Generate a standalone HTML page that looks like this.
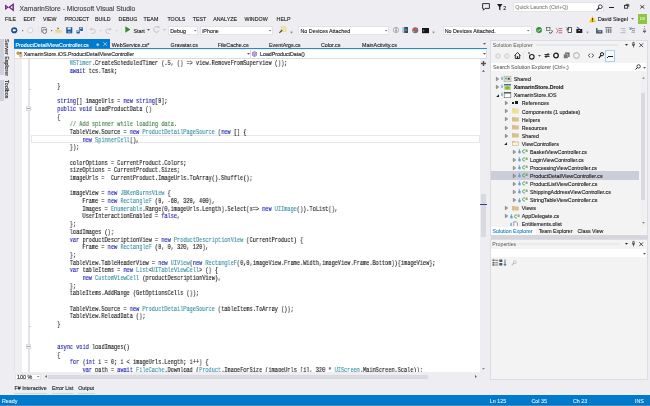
<!DOCTYPE html>
<html><head><meta charset="utf-8"><style>
html,body{margin:0;padding:0;}
body{width:650px;height:406px;overflow:hidden;background:#eeeef2;position:relative;will-change:transform;font-family:"Liberation Sans",sans-serif;}
.t{position:absolute;white-space:pre;line-height:1;-webkit-text-stroke:0.12px currentColor;font-family:"Liberation Sans",sans-serif;}
.b{position:absolute;}
svg.b{overflow:visible}
.code{position:absolute;margin:0;-webkit-text-stroke:0.14px currentColor;transform-origin:0 0;transform:scaleX(0.8219);font-family:"Liberation Mono",monospace;font-size:6.4px;color:#1a1a1a;white-space:pre;}
</style></head><body>
<svg class="b" style="left:5.1px;top:3.3px" width="9" height="8.5" viewBox="0 0 9 8.5"><path d="M8.9 0 V8.5 L3.2 4.25 Z" fill="#68217a"/><path d="M7.5 2.6 V5.9 L5.3 4.25Z" fill="#efe6f4"/><path d="M0 1.6 L3.8 4.25 L0 6.9Z" fill="#68217a"/><path d="M0.8 3.3 L2.1 4.25 L0.8 5.2Z" fill="#b888d3"/></svg>
<div class="t" style="left:19.5px;top:5.68px;font-size:6.76px;color:#444444;font-weight:normal;">XamarinStore - Microsoft Visual Studio</div>
<svg class="b" style="left:482px;top:3px" width="8" height="8" viewBox="0 0 8 8"><path d="M0.6 0.6 H7.4 V5.4 H3 L1.4 7.2 V5.4 H0.6 Z" fill="none" stroke="#1e1e1e" stroke-width="0.9"/></svg>
<svg class="b" style="left:497px;top:3.5px" width="6" height="7" viewBox="0 0 6 7"><path d="M0 0 H5.5 L3.4 3 V6.5 L2.1 5.6 V3 Z" fill="#1e1e1e"/></svg>
<div class="t" style="left:503.3px;top:5.53px;font-size:5.3px;color:#1e1e1e;font-weight:normal;">2</div>
<div class="b" style="left:512.5px;top:2px;width:91px;height:10px;background:#ffffff;border:0.6px solid #e3e4ea;box-sizing:border-box"></div>
<div class="t" style="left:515.3px;top:5.43px;font-size:5.3px;color:#8a8a8a;font-weight:normal;">Quick Launch (Ctrl+Q)</div>
<svg class="b" style="left:596px;top:3.5px" width="7" height="7" viewBox="0 0 7 7"><circle cx="4.3" cy="2.7" r="1.9" fill="none" stroke="#1e1e1e" stroke-width="0.9"/><path d="M3 4 L0.6 6.4" stroke="#1e1e1e" stroke-width="1.1"/></svg>
<div class="b" style="left:608.8px;top:6.9px;width:5px;height:1.2px;background:#1e1e1e;"></div>
<svg class="b" style="left:624.2px;top:4.2px" width="5.2" height="4.5" viewBox="0 0 5.2 4.5"><path d="M1.6 0.4 H4.8 V2.8" fill="none" stroke="#1e1e1e" stroke-width="0.8"/><rect x="0.4" y="1.5" width="3.3" height="2.7" fill="none" stroke="#1e1e1e" stroke-width="0.8"/></svg>
<svg class="b" style="left:640px;top:4.5px" width="4.6" height="3.8" viewBox="0 0 4.6 3.8"><path d="M0.3 0.3 L4.3 3.5 M4.3 0.3 L0.3 3.5" stroke="#1e1e1e" stroke-width="0.8"/></svg>
<div class="t" style="left:4.9px;top:17.03px;font-size:5.3px;color:#1e1e1e;width:9.7px;" data-w="9.1">FILE</div>
<div class="t" style="left:23.4px;top:17.03px;font-size:5.3px;color:#1e1e1e;width:11.2px;" data-w="10.600000000000001">EDIT</div>
<div class="t" style="left:43px;top:17.03px;font-size:5.3px;color:#1e1e1e;width:13.6px;" data-w="13">VIEW</div>
<div class="t" style="left:64.6px;top:17.03px;font-size:5.3px;color:#1e1e1e;width:21.4px;" data-w="20.80000000000001">PROJECT</div>
<div class="t" style="left:95px;top:17.03px;font-size:5.3px;color:#1e1e1e;width:14.6px;" data-w="14">BUILD</div>
<div class="t" style="left:118.6px;top:17.03px;font-size:5.3px;color:#1e1e1e;width:17.0px;" data-w="16.400000000000006">DEBUG</div>
<div class="t" style="left:143.6px;top:17.03px;font-size:5.3px;color:#1e1e1e;width:15.3px;" data-w="14.700000000000017">TEAM</div>
<div class="t" style="left:167.4px;top:17.03px;font-size:5.3px;color:#1e1e1e;width:16.9px;" data-w="16.299999999999983">TOOLS</div>
<div class="t" style="left:192.8px;top:17.03px;font-size:5.3px;color:#1e1e1e;width:11.8px;" data-w="11.199999999999989">TEST</div>
<div class="t" style="left:213.2px;top:17.03px;font-size:5.3px;color:#1e1e1e;width:22.6px;" data-w="22.0">ANALYZE</div>
<div class="t" style="left:244.4px;top:17.03px;font-size:5.3px;color:#1e1e1e;width:24.2px;" data-w="23.599999999999994">WINDOW</div>
<div class="t" style="left:276.6px;top:17.03px;font-size:5.3px;color:#1e1e1e;width:13.0px;" data-w="12.399999999999977">HELP</div>
<svg class="b" style="left:589px;top:16px" width="7" height="6.5" viewBox="0 0 7 6.5"><path d="M3.5 0.2 L6.9 6.3 H0.1 Z" fill="#f5c400"/><rect x="3.1" y="2" width="0.8" height="2.4" fill="#1e1e1e"/><rect x="3.1" y="4.9" width="0.8" height="0.8" fill="#1e1e1e"/></svg>
<div class="t" style="left:597.9px;top:17.40px;font-size:5.35px;color:#1e1e1e;font-weight:normal;">David Siegel</div>
<svg class="b" style="left:631px;top:18px" width="3" height="2" viewBox="0 0 3 2"><path d="M0 0 H3 L1.5 1.8Z" fill="#717171"/></svg>
<div class="b" style="left:638px;top:14px;width:9px;height:9.5px;background:#8dc63f;"></div>
<div class="t" style="left:640px;top:18.07px;font-size:3.5px;color:#e8f5d0;font-weight:normal;">DS</div>
<div class="b" style="left:6.5px;top:26px;width:0.8px;height:9px;background:repeating-linear-gradient(#d0d0d6 0 1px, transparent 1px 2px);"></div>
<svg class="b" style="left:10.8px;top:27px" width="6.5" height="6.5" viewBox="0 0 6.5 6.5"><circle cx="3.25" cy="3.25" r="3.1" fill="#1f4e86"/><path d="M1.8 2.2 H4.2 L5 3.25 L4.2 4.3 H1.8Z" fill="#fff"/></svg>
<svg class="b" style="left:21.5px;top:29.6px" width="2" height="2"><rect width="1.2" height="1.2" fill="#717171"/></svg>
<svg class="b" style="left:26.8px;top:27px" width="6.5" height="6.5" viewBox="0 0 6.5 6.5"><circle cx="3.25" cy="3.25" r="2.6" fill="#f4f4f6" stroke="#cfcfd2" stroke-width="0.9"/></svg>
<div class="b" style="left:38px;top:26px;width:0.6px;height:9px;background:#e6e7ec;"></div>
<svg class="b" style="left:40.5px;top:26.6px" width="7" height="7" viewBox="0 0 7 7"><path d="M1 0.5 H4.5 L5.5 1.5 V3" fill="none" stroke="#777" stroke-width="0.8"/><circle cx="3.6" cy="4.4" r="2" fill="#eee" stroke="#666" stroke-width="0.9"/><path d="M0.7 0.5 V5.5" stroke="#777" stroke-width="0.8"/></svg>
<svg class="b" style="left:50.5px;top:29.6px" width="2" height="2"><rect width="1.2" height="1.2" fill="#717171"/></svg>
<svg class="b" style="left:55px;top:27px" width="7" height="6.5" viewBox="0 0 7 6.5"><path d="M0.3 2.6 H2.8 L3.4 3.2 H6.8 V6.3 H0.3Z" fill="#eedb9c"/><path d="M0.3 3.6 H6.8" stroke="#d8c07a" stroke-width="0.5"/><path d="M2.6 0.3 L4 1.5 L2.6 2.6" fill="#333"/></svg>
<svg class="b" style="left:65.8px;top:27.2px" width="6.5" height="6.5" viewBox="0 0 6.5 6.5"><rect x="0.2" y="0.2" width="6.1" height="6.1" fill="#1f5c99"/><rect x="1.6" y="0.5" width="3.2" height="2" fill="#eaf2fb"/><rect x="2" y="4" width="2.5" height="2.3" fill="#6b94c4"/></svg>
<svg class="b" style="left:75.5px;top:26.8px" width="7" height="7" viewBox="0 0 7 7"><rect x="3" y="0.2" width="3.8" height="3.8" fill="#1f5c99"/><rect x="0.2" y="3" width="3.8" height="3.8" fill="#1f5c99" stroke="#eeeef2" stroke-width="0.5"/><rect x="1" y="3.6" width="2" height="1" fill="#eaf2fb"/><rect x="3.7" y="0.7" width="2" height="1" fill="#eaf2fb"/></svg>
<div class="b" style="left:86px;top:26px;width:0.6px;height:9px;background:#e6e7ec;"></div>
<svg class="b" style="left:89px;top:26.8px" width="7" height="7" viewBox="0 0 7 7"><path d="M2.2 2.2 H4.2 A2 2 0 0 1 4.2 6.3 H2.6" fill="none" stroke="#c4c4c8" stroke-width="0.9"/><path d="M0.4 2.2 L2.5 0.4 V4Z" fill="#c4c4c8"/></svg>
<svg class="b" style="left:99.5px;top:29.6px" width="2" height="2"><rect width="1.2" height="1.2" fill="#c8c8c8"/></svg>
<svg class="b" style="left:105px;top:26.8px" width="7" height="7" viewBox="0 0 7 7"><path d="M4.8 2.2 H2.8 A2 2 0 0 0 2.8 6.3 H4.4" fill="none" stroke="#c4c4c8" stroke-width="0.9"/><path d="M6.6 2.2 L4.5 0.4 V4Z" fill="#c4c4c8"/></svg>
<svg class="b" style="left:115.5px;top:29.6px" width="2" height="2"><rect width="1.2" height="1.2" fill="#c8c8c8"/></svg>
<div class="b" style="left:120.5px;top:26px;width:0.6px;height:9px;background:#e6e7ec;"></div>
<svg class="b" style="left:125px;top:26.3px" width="6" height="7" viewBox="0 0 6 7"><path d="M0.3 0.3 L5.5 3.5 L0.3 6.7Z" fill="#388a34"/></svg>
<div class="t" style="left:133.5px;top:28.70px;font-size:5.35px;color:#1e1e1e;font-weight:normal;">Start</div>
<svg class="b" style="left:147px;top:29.3px" width="3" height="2" viewBox="0 0 3 2"><path d="M0 0 H3 L1.5 1.8Z" fill="#555"/></svg>
<svg class="b" style="left:153px;top:26.3px" width="7" height="7" viewBox="0 0 7 7"><path d="M5.8 2 A2.8 2.8 0 1 0 6 4.5" fill="none" stroke="#bdbdbd" stroke-width="1"/><path d="M4.5 0.3 L6.5 0.5 L6.2 2.6Z" fill="#bdbdbd"/></svg>
<svg class="b" style="left:163px;top:29.3px" width="3" height="2" viewBox="0 0 3 2"><path d="M0 0 H3 L1.5 1.8Z" fill="#bdbdbd"/></svg>
<div class="b" style="left:168px;top:25.6px;width:30px;height:9.399999999999999px;background:#ffffff;border:0.8px solid #e2e3e8;box-sizing:border-box"></div>
<div class="t" style="left:170.2px;top:28.50px;font-size:5.35px;color:#1e1e1e;font-weight:normal;">Debug</div>
<svg class="b" style="left:193.7px;top:29.7px" width="2.4" height="1.6" viewBox="0 0 2.4 1.6"><path d="M0 0 H2.4 L1.2 1.5Z" fill="#717171"/></svg>
<div class="b" style="left:200px;top:25.6px;width:73.39999999999998px;height:9.399999999999999px;background:#ffffff;border:0.8px solid #e2e3e8;box-sizing:border-box"></div>
<div class="t" style="left:202.2px;top:28.50px;font-size:5.35px;color:#1e1e1e;font-weight:normal;">iPhone</div>
<svg class="b" style="left:269.09999999999997px;top:29.7px" width="2.4" height="1.6" viewBox="0 0 2.4 1.6"><path d="M0 0 H2.4 L1.2 1.5Z" fill="#717171"/></svg>
<svg class="b" style="left:278.8px;top:26.2px" width="8" height="7.5" viewBox="0 0 8 7.5"><rect x="1.8" y="0.4" width="5.6" height="5.4" fill="#ead68c"/><rect x="2.6" y="1.2" width="4" height="3.8" fill="#f3e4a8"/><path d="M0.4 6.8 L3.2 4" stroke="#4a4a55" stroke-width="1.2"/></svg>
<svg class="b" style="left:290px;top:31.3px" width="3" height="3" viewBox="0 0 3 3"><path d="M0.3 0.4 H2.7" stroke="#999" stroke-width="0.5"/><path d="M0.3 1.2 H2.7 L1.5 2.6Z" fill="#666"/></svg>
<div class="b" style="left:298.3px;top:25.6px;width:91.09999999999997px;height:9.399999999999999px;background:#ffffff;border:0.8px solid #e2e3e8;box-sizing:border-box"></div>
<div class="t" style="left:300.5px;top:28.50px;font-size:5.35px;color:#1e1e1e;font-weight:normal;">No Devices Attached</div>
<svg class="b" style="left:385.09999999999997px;top:29.7px" width="2.4" height="1.6" viewBox="0 0 2.4 1.6"><path d="M0 0 H2.4 L1.2 1.5Z" fill="#717171"/></svg>
<svg class="b" style="left:392.6px;top:27px" width="6" height="6" viewBox="0 0 6 6"><circle cx="3" cy="3" r="2.6" fill="#fafafa" stroke="#8a8a90" stroke-width="0.7"/><rect x="2.6" y="2.4" width="0.9" height="2.2" fill="#333"/><rect x="2.6" y="1.2" width="0.9" height="0.7" fill="#333"/></svg>
<svg class="b" style="left:402px;top:27px" width="6" height="6" viewBox="0 0 6 6"><rect x="0" y="0" width="2.2" height="6" fill="#a9d0e3"/><rect x="2.2" y="0" width="3.8" height="6" fill="#3e4b5b"/><rect x="3" y="2" width="2" height="2" fill="#6a7a8a"/></svg>
<svg class="b" style="left:412px;top:27px" width="6.5" height="6.5" viewBox="0 0 6.5 6.5"><circle cx="3.25" cy="3.25" r="3" fill="#687684"/><path d="M0.3 3.2 A3 3 0 0 1 6.2 3 L3.8 3.6 Z" fill="#d94a5a"/><circle cx="1.6" cy="4.6" r="1" fill="#7cb87a"/></svg>
<svg class="b" style="left:422.3px;top:27.6px" width="7" height="5.2" viewBox="0 0 7 5.2"><rect x="0" y="0" width="7" height="5.2" fill="#151515"/><path d="M1 1.8 L2.2 2.6 L1 3.4" stroke="#ddd" stroke-width="0.5" fill="none"/></svg>
<svg class="b" style="left:432.2px;top:31.2px" width="3" height="3" viewBox="0 0 3 3"><path d="M0.3 0.4 H2.7" stroke="#999" stroke-width="0.5"/><path d="M0.3 1.2 H2.7 L1.5 2.6Z" fill="#777"/></svg>
<div class="b" style="left:442.5px;top:25.6px;width:89.0px;height:9.399999999999999px;background:#ffffff;border:0.8px solid #e2e3e8;box-sizing:border-box"></div>
<div class="t" style="left:444.7px;top:28.50px;font-size:5.35px;color:#1e1e1e;font-weight:normal;">No Devices Attached.</div>
<svg class="b" style="left:527.2px;top:29.7px" width="2.4" height="1.6" viewBox="0 0 2.4 1.6"><path d="M0 0 H2.4 L1.2 1.5Z" fill="#717171"/></svg>
<svg class="b" style="left:536px;top:27px" width="6" height="6" viewBox="0 0 6 6"><circle cx="3" cy="3" r="2.9" fill="#2f8f3a"/><path d="M1.4 3.1 L2.6 4.2 L4.6 2" fill="none" stroke="#fff" stroke-width="0.9"/></svg>
<svg class="b" style="left:546px;top:27px" width="6.5" height="6" viewBox="0 0 6.5 6"><rect x="0.4" y="0.4" width="3.6" height="3.2" fill="#f0f0f0" stroke="#555" stroke-width="0.7"/><path d="M3 5.5 A1.8 1.8 0 1 0 5.8 3.2" fill="none" stroke="#333" stroke-width="0.9"/></svg>
<svg class="b" style="left:556px;top:27.5px" width="6.5" height="5.5" viewBox="0 0 6.5 5.5"><path d="M2.5 0.6 H6.2 M2.5 2.7 H6.2 M2.5 4.8 H6.2" stroke="#b84848" stroke-width="0.8"/><path d="M0.3 0.3 L2 2.7 L0.3 5.2" stroke="#b84848" stroke-width="0.7" fill="none"/></svg>
<svg class="b" style="left:566px;top:27px" width="6.5" height="6" viewBox="0 0 6.5 6"><path d="M2 0.5 H5.5 V5.5 H2 Z" fill="#fafafa" stroke="#333" stroke-width="0.8"/><path d="M0.3 0.5 L2.6 2.8 M0.3 2.8 H2.6 V0.5" stroke="#333" stroke-width="0.7" fill="none"/></svg>
<svg class="b" style="left:575.5px;top:27px" width="6.5" height="6" viewBox="0 0 6.5 6"><rect x="0.3" y="2" width="6" height="4" fill="#1e1e1e"/><path d="M0.8 0.3 L3.5 1.8" stroke="#2a6cb0" stroke-width="1.1"/><rect x="2.5" y="3" width="1.6" height="1" fill="#bbb"/></svg>
<svg class="b" style="left:585.8px;top:31.2px" width="3" height="3" viewBox="0 0 3 3"><path d="M0.3 0.4 H2.7" stroke="#aaa" stroke-width="0.5"/><path d="M0.3 1.2 H2.7 L1.5 2.6Z" fill="#888"/></svg>
<svg class="b" style="left:596px;top:27.5px" width="6.5" height="5.5" viewBox="0 0 6.5 5.5"><rect x="0.2" y="0" width="1.2" height="5.5" fill="#2d3e50"/><rect x="1.4" y="2.3" width="5" height="3.2" fill="#2d3e50"/><rect x="2.4" y="3" width="3" height="1.5" fill="#7aa6d0"/></svg>
<svg class="b" style="left:605px;top:27px" width="7" height="6" viewBox="0 0 7 6"><path d="M0.3 0.6 H6.7" stroke="#777" stroke-width="1"/><rect x="0.8" y="1.6" width="1.6" height="4.4" fill="#8a9098"/><rect x="3" y="1.6" width="1.3" height="4.4" fill="#707880"/><rect x="4.9" y="1.6" width="1.6" height="4.4" fill="#8a9098"/></svg>
<svg class="b" style="left:620px;top:27.5px" width="6" height="5.5" viewBox="0 0 6 5.5"><path d="M0.5 0.7 H5.5 M2.5 2.7 H5.5 M0.5 4.7 H5.5" stroke="#b0b3b8" stroke-width="0.9"/></svg>
<svg class="b" style="left:629px;top:27px" width="6.5" height="6" viewBox="0 0 6.5 6"><path d="M2.5 1.5 H6 M3 3.3 H6 M2.5 5.2 H6" stroke="#8a9098" stroke-width="0.9"/><path d="M0.3 0.4 L2.2 2.2 M0.3 2.2 H2.2 V0.4" stroke="#3d6fa8" stroke-width="0.7" fill="none"/></svg>
<div class="b" style="left:643.5px;top:25.5px;width:1px;height:3px;background:repeating-linear-gradient(#999 0 1px, transparent 1px 2px);"></div>
<svg class="b" style="left:642.5px;top:30.3px" width="3" height="3" viewBox="0 0 3 3"><path d="M0 0 H3 M0 1 H3 L1.5 2.8Z" stroke="#555" stroke-width="0.5" fill="#555"/></svg>
<div class="b" style="left:0px;top:38.5px;width:4px;height:36.5px;background:#cfd1da;"></div>
<div class="b" style="left:0px;top:79.5px;width:4px;height:21px;background:#cfd1da;"></div>
<div class="t" style="left:9.3px;top:39px;font-size:5.35px;color:#1e1e1e;transform-origin:0 0;transform:rotate(90deg)">Server Explorer</div>
<div class="t" style="left:9.3px;top:80.3px;font-size:5.35px;color:#1e1e1e;transform-origin:0 0;transform:rotate(90deg)">Toolbox</div>
<div class="b" style="left:14px;top:39px;width:95.6px;height:10px;background:#007acc;"></div>
<div class="t" style="left:15.5px;top:42.90px;font-size:5.35px;color:#ffffff;font-weight:normal;">ProductDetailViewController.cs</div>
<svg class="b" style="left:95.5px;top:42.5px" width="3.5" height="3.5" viewBox="0 0 3.5 3.5"><path d="M1.75 0 L3.5 1.75 L1.75 3.5 L0 1.75Z" fill="#9fd3f7"/></svg>
<svg class="b" style="left:102.6px;top:41.9px" width="4.4" height="4.2" viewBox="0 0 4.4 4.2"><path d="M0.3 0.3 L4.1 3.9 M4.1 0.3 L0.3 3.9" stroke="#a3d7fb" stroke-width="0.8"/></svg>
<div class="t" style="left:111.8px;top:42.90px;font-size:5.35px;color:#1e1e1e;font-weight:normal;">WebService.cs*</div>
<div class="t" style="left:170.5px;top:42.90px;font-size:5.35px;color:#1e1e1e;font-weight:normal;">Gravatar.cs</div>
<div class="t" style="left:217.7px;top:42.90px;font-size:5.35px;color:#1e1e1e;font-weight:normal;">FileCache.cs</div>
<div class="t" style="left:269px;top:42.90px;font-size:5.35px;color:#1e1e1e;font-weight:normal;">EventArgs.cs</div>
<div class="t" style="left:321px;top:42.90px;font-size:5.35px;color:#1e1e1e;font-weight:normal;">Color.cs</div>
<div class="t" style="left:362px;top:42.90px;font-size:5.35px;color:#1e1e1e;font-weight:normal;">MainActivity.cs</div>
<svg class="b" style="left:483px;top:43.2px" width="3" height="2" viewBox="0 0 3 2"><path d="M0 0 H3 L1.5 1.8Z" fill="#555"/></svg>
<div class="b" style="left:14px;top:48.3px;width:473px;height:1.0px;background:#2a88d0;"></div>
<div class="b" style="left:14px;top:49.5px;width:473px;height:9px;background:#ffffff;border-bottom:0.8px solid #dcdde4;border-left:0.6px solid #dcdde4;border-right:0.6px solid #dcdde4;box-sizing:border-box"></div>
<div class="b" style="left:250px;top:49.5px;width:0.7px;height:9px;background:#dcdde4;"></div>
<svg class="b" style="left:16px;top:50.5px" width="7" height="7" viewBox="0 0 7 7"><circle cx="2.3" cy="2.3" r="1.8" fill="#c09553"/><circle cx="4.8" cy="4.8" r="1.8" fill="#dcb67a"/><circle cx="4.8" cy="2" r="1" fill="#555"/></svg>
<div class="t" style="left:23.8px;top:52.43px;font-size:5.3px;color:#1e1e1e;font-weight:normal;">XamarinStore.iOS.ProductDetailViewController</div>
<svg class="b" style="left:246.5px;top:53px" width="3" height="2" viewBox="0 0 3 2"><path d="M0 0 H3 L1.5 1.8Z" fill="#555"/></svg>
<svg class="b" style="left:251.5px;top:50.8px" width="5" height="6" viewBox="0 0 5 6"><path d="M2.5 0.4 L4.6 1.5 V4.5 L2.5 5.6 L0.4 4.5 V1.5Z" fill="#c9b6e0" stroke="#7d5fae" stroke-width="0.6"/><path d="M0.4 1.5 L2.5 2.7 L4.6 1.5 M2.5 2.7 V5.6" stroke="#7d5fae" stroke-width="0.45" fill="none"/></svg>
<div class="t" style="left:260px;top:52.43px;font-size:5.3px;color:#1e1e1e;font-weight:normal;">LoadProductData()</div>
<svg class="b" style="left:482.5px;top:53px" width="3" height="2" viewBox="0 0 3 2"><path d="M0 0 H3 L1.5 1.8Z" fill="#555"/></svg>
<div class="b" style="left:14px;top:58.5px;width:466px;height:313.5px;background:#ffffff;"></div>
<div class="b" style="left:14px;top:58.5px;width:7.5px;height:313.5px;background:#f0f0f3;border-left:0.6px solid #e2e3e8;box-sizing:border-box"></div>
<div class="b" style="left:28.2px;top:58.5px;width:1.5px;height:313.5px;background:#e4e4e6;"></div>
<div class="b" style="left:28.5px;top:89px;width:2px;height:0.8px;background:#c8c8c8;"></div>
<div class="b" style="left:28.5px;top:326px;width:2px;height:0.8px;background:#c8c8c8;"></div>
<div class="b" style="left:25.8px;top:105.9px;width:5.4px;height:5.2px;background:#f7f7f7;border:0.6px solid #dadada;box-sizing:border-box"></div>
<div class="b" style="left:27.2px;top:108.2px;width:2.6px;height:0.6px;background:#a0a0a0;"></div>
<div class="b" style="left:25.8px;top:343.59999999999997px;width:5.4px;height:5.2px;background:#f7f7f7;border:0.6px solid #dadada;box-sizing:border-box"></div>
<div class="b" style="left:27.2px;top:345.9px;width:2.6px;height:0.6px;background:#a0a0a0;"></div>
<div class="b" style="left:31px;top:135.2px;width:449px;height:7.6px;background:transparent;border:0.9px solid #e6e6e8;box-sizing:border-box"></div>
<pre class="code" style="left:31.8px;top:60.06px;line-height:7.67px">            <span style="color:#3a8fa2">NSTimer</span>.CreateScheduledTimer (.5, () =&gt; view.RemoveFromSuperview ());
            <span style="color:#1c1cb0">await</span> tcs.Task;

        }

        <span style="color:#1c1cb0">string</span>[] imageUrls = <span style="color:#1c1cb0">new</span> <span style="color:#1c1cb0">string</span>[0];
        <span style="color:#1c1cb0">public</span> <span style="color:#1c1cb0">void</span> LoadProductData ()
        {
            <span style="color:#3d7f45">// Add spinner while loading data.</span>
            TableView.Source = <span style="color:#1c1cb0">new</span> <span style="color:#3a8fa2">ProductDetailPageSource</span> (<span style="color:#1c1cb0">new</span> [] {
                <span style="color:#1c1cb0">new</span> <span style="color:#3a8fa2">SpinnerCell</span>(),
            });

            colorOptions = CurrentProduct.Colors;
            sizeOptions = CurrentProduct.Sizes;
            imageUrls =  CurrentProduct.ImageUrls.ToArray().Shuffle();

            imageView = <span style="color:#1c1cb0">new</span> <span style="color:#3a8fa2">JBKenBurnsView</span> {
                Frame = <span style="color:#1c1cb0">new</span> <span style="color:#3a8fa2">RectangleF</span> (0, -60, 320, 400),
                Images = <span style="color:#3a8fa2">Enumerable</span>.Range(0,imageUrls.Length).Select(x=&gt; <span style="color:#1c1cb0">new</span> <span style="color:#3a8fa2">UIImage</span>()).ToList(),
                UserInteractionEnabled = <span style="color:#1c1cb0">false</span>,
            };
            loadImages ();
            <span style="color:#1c1cb0">var</span> productDescriptionView = <span style="color:#1c1cb0">new</span> <span style="color:#3a8fa2">ProductDescriptionView</span> (CurrentProduct) {
                Frame = <span style="color:#1c1cb0">new</span> <span style="color:#3a8fa2">RectangleF</span> (0, 0, 320, 120),
            };
            TableView.TableHeaderView = <span style="color:#1c1cb0">new</span> <span style="color:#3a8fa2">UIView</span>(<span style="color:#1c1cb0">new</span> <span style="color:#3a8fa2">RectangleF</span>(0,0,imageView.Frame.Width,imageView.Frame.Bottom)){imageView};
            <span style="color:#1c1cb0">var</span> tableItems = <span style="color:#1c1cb0">new</span> <span style="color:#3a8fa2">List</span>&lt;<span style="color:#3a8fa2">UITableViewCell</span>&gt; () {
                <span style="color:#1c1cb0">new</span> <span style="color:#3a8fa2">CustomViewCell</span> (productDescriptionView),
            };
            tableItems.AddRange (GetOptionsCells ());

            TableView.Source = <span style="color:#1c1cb0">new</span> <span style="color:#3a8fa2">ProductDetailPageSource</span> (tableItems.ToArray ());
            TableView.ReloadData ();
        }


        <span style="color:#1c1cb0">async</span> <span style="color:#1c1cb0">void</span> loadImages()
        {
            <span style="color:#1c1cb0">for</span> (<span style="color:#1c1cb0">int</span> i = 0; i &lt; imageUrls.Length; i++) {
                <span style="color:#1c1cb0">var</span> path = <span style="color:#1c1cb0">await</span> <span style="color:#3a8fa2">FileCache</span>.Download (<span style="color:#3a8fa2">Product</span>.ImageForSize (imageUrls [i], 320 * <span style="color:#3a8fa2">UIScreen</span>.MainScreen.Scale));</pre>
<div class="b" style="left:479.6px;top:58.5px;width:7.4px;height:313.8px;background:#eeeef2;"></div>
<div class="b" style="left:481px;top:194px;width:4.5px;height:43px;background:#d9dae0;"></div>
<div class="b" style="left:479.6px;top:203.6px;width:7.4px;height:0.9px;background:#3c3c9c;"></div>
<svg class="b" style="left:481px;top:60.5px" width="5" height="5" viewBox="0 0 5 5"><path d="M2.5 0 V5 M0 2.5 H5" stroke="#555" stroke-width="1.4"/></svg>
<svg class="b" style="left:482px;top:69.5px" width="3" height="2" viewBox="0 0 3 2"><path d="M0 1.8 H3 L1.5 0Z" fill="#555"/></svg>
<svg class="b" style="left:482px;top:367.8px" width="3" height="2" viewBox="0 0 3 2"><path d="M0 0 H3 L1.5 1.8Z" fill="#868999"/></svg>
<div class="b" style="left:14px;top:372.3px;width:473px;height:8px;background:#eeeef2;"></div>
<div class="b" style="left:14.8px;top:373.5px;width:26.400000000000002px;height:6.199999999999989px;background:#ffffff;border:0.8px solid #e2e3e8;box-sizing:border-box"></div>
<div class="t" style="left:17.0px;top:374.80px;font-size:5.35px;color:#1e1e1e;font-weight:normal;">100 %</div>
<svg class="b" style="left:36.900000000000006px;top:376.0px" width="2.4" height="1.6" viewBox="0 0 2.4 1.6"><path d="M0 0 H2.4 L1.2 1.5Z" fill="#717171"/></svg>
<svg class="b" style="left:44.5px;top:375px" width="2" height="3" viewBox="0 0 2 3"><path d="M1.8 0 V3 L0 1.5Z" fill="#555"/></svg>
<div class="b" style="left:48.3px;top:374.8px;width:380px;height:4.2px;background:#d9dae0;"></div>
<svg class="b" style="left:474.5px;top:375px" width="2" height="3" viewBox="0 0 2 3"><path d="M0 0 V3 L1.8 1.5Z" fill="#555"/></svg>
<div class="t" style="left:14.5px;top:385.73px;font-size:5.3px;color:#1e1e1e;font-weight:normal;">F# Interactive</div>
<div class="b" style="left:14.0px;top:392.6px;width:33.0px;height:1.9px;background:#cfd8e6;"></div>
<div class="t" style="left:52px;top:385.73px;font-size:5.3px;color:#1e1e1e;font-weight:normal;">Error List</div>
<div class="b" style="left:51.5px;top:392.6px;width:21.799999999999997px;height:1.9px;background:#cfd8e6;"></div>
<div class="t" style="left:78.2px;top:385.73px;font-size:5.3px;color:#1e1e1e;font-weight:normal;">Output</div>
<div class="b" style="left:77.7px;top:392.6px;width:17.799999999999997px;height:1.9px;background:#cfd8e6;"></div>
<div class="b" style="left:0px;top:394.5px;width:650px;height:11.5px;background:#007acc;"></div>
<div class="t" style="left:2px;top:398.70px;font-size:5.35px;color:#f4f9fd;font-weight:normal;-webkit-text-stroke:0.05px currentColor">Ready</div>
<div class="b" style="left:0px;top:404px;width:650px;height:1px;background:#1070b4;"></div>
<div class="b" style="left:0px;top:405px;width:650px;height:1px;background:#3a90d0;"></div>
<div class="t" style="left:489.8px;top:398.70px;font-size:5.35px;color:#f4f9fd;font-weight:normal;-webkit-text-stroke:0.05px currentColor">Ln 125</div>
<div class="t" style="left:531.5px;top:398.70px;font-size:5.35px;color:#f4f9fd;font-weight:normal;-webkit-text-stroke:0.05px currentColor">Col 35</div>
<div class="t" style="left:573px;top:398.70px;font-size:5.35px;color:#f4f9fd;font-weight:normal;-webkit-text-stroke:0.05px currentColor">Ch 23</div>
<div class="t" style="left:635px;top:398.70px;font-size:5.35px;color:#f4f9fd;font-weight:normal;-webkit-text-stroke:0.05px currentColor">INS</div>
<div class="b" style="left:490.4px;top:39.6px;width:157.2px;height:196px;background:#f3f3f4;border:0.7px solid #dcdde4;box-sizing:border-box"></div>
<div class="t" style="left:492.8px;top:43.25px;font-size:5.25px;color:#555555;font-weight:normal;-webkit-text-stroke:0">Solution Explorer</div>
<div class="b" style="left:536px;top:43.8px;width:82px;height:2.6px;background:#e6e7eb;"></div>
<svg class="b" style="left:624.5px;top:44px" width="3" height="2" viewBox="0 0 3 2"><path d="M0 0 H3 L1.5 1.8Z" fill="#1e1e1e"/></svg>
<svg class="b" style="left:632px;top:41.8px" width="3" height="5.5" viewBox="0 0 3 5.5"><path d="M0.8 0.4 H2.2 V3 H0.8Z M0 3 H3 M1.5 3 V5.5" stroke="#1e1e1e" stroke-width="0.6" fill="none"/></svg>
<svg class="b" style="left:639.3px;top:42.8px" width="4.4" height="4.4" viewBox="0 0 4.4 4.4"><path d="M0.3 0.3 L4.1 4.1 M4.1 0.3 L0.3 4.1" stroke="#1e1e1e" stroke-width="0.75"/></svg>
<svg class="b" style="left:494.5px;top:52.8px" width="6" height="6" viewBox="0 0 6 6"><circle cx="3" cy="3" r="2.4" fill="#e0e0e0" stroke="#d0d0d0" stroke-width="0.7"/><circle cx="3" cy="3" r="1.1" fill="#f0f0f0"/></svg>
<svg class="b" style="left:503.5px;top:52.8px" width="6" height="6" viewBox="0 0 6 6"><circle cx="3" cy="3" r="2.4" fill="#e0e0e0" stroke="#d0d0d0" stroke-width="0.7"/><circle cx="3" cy="3" r="1.1" fill="#f0f0f0"/></svg>
<svg class="b" style="left:514px;top:52px" width="7" height="7" viewBox="0 0 7 7"><path d="M0.5 3.5 L3.5 0.6 L6.5 3.5 M1.3 3 V6.5 H5.7 V3" fill="none" stroke="#1e1e1e" stroke-width="0.9"/><rect x="2.8" y="4.2" width="1.4" height="2.3" fill="#1e1e1e"/></svg>
<div class="b" style="left:523px;top:51.5px;width:0.6px;height:8px;background:#e6e6ea;"></div>
<svg class="b" style="left:527.5px;top:51.5px" width="7" height="8" viewBox="0 0 7 8"><circle cx="3.8" cy="4.8" r="2.3" fill="none" stroke="#1e1e1e" stroke-width="1.1"/><circle cx="1" cy="1" r="0.8" fill="#1e1e1e"/></svg>
<svg class="b" style="left:538px;top:54.5px" width="3" height="2" viewBox="0 0 3 2"><path d="M0 0 H3 L1.5 1.8Z" fill="#555"/></svg>
<svg class="b" style="left:543.5px;top:52px" width="6" height="7" viewBox="0 0 6 7"><path d="M0.5 2.5 H5 M3.5 1 L5 2.5 L3.5 4 M5.5 4.5 H1 M2.5 3 L1 4.5 L2.5 6" stroke="#1e1e1e" stroke-width="0.9" fill="none"/></svg>
<svg class="b" style="left:553px;top:52px" width="6" height="7" viewBox="0 0 6 7"><circle cx="3" cy="3.5" r="2.3" fill="none" stroke="#1e1e1e" stroke-width="1.3"/></svg>
<svg class="b" style="left:562.5px;top:52px" width="7" height="7" viewBox="0 0 7 7"><rect x="2" y="0.5" width="4.5" height="4.5" fill="#555"/><rect x="0.5" y="2" width="4.5" height="4.5" fill="#777" stroke="#f5f5f5" stroke-width="0.5"/></svg>
<svg class="b" style="left:572.5px;top:52px" width="7" height="7" viewBox="0 0 7 7"><circle cx="3.5" cy="3.5" r="2.8" fill="none" stroke="#bdbdbd" stroke-width="1.2"/></svg>
<svg class="b" style="left:587.5px;top:53px" width="6" height="5" viewBox="0 0 6 5"><path d="M2 0.5 L0.5 2.5 L2 4.5 M4 0.5 L5.5 2.5 L4 4.5" stroke="#1e1e1e" stroke-width="0.8" fill="none"/></svg>
<svg class="b" style="left:598px;top:52px" width="6" height="7" viewBox="0 0 6 7"><path d="M0.8 6.2 L3.2 3.2" stroke="#1e1e1e" stroke-width="1.2"/><circle cx="4" cy="2.2" r="1.6" fill="none" stroke="#1e1e1e" stroke-width="1"/></svg>
<div class="b" style="left:604.6px;top:50px;width:10.1px;height:11.6px;background:#f7fbff;border:0.8px solid #a9cff2;box-sizing:border-box"></div>
<div class="b" style="left:606.8px;top:56.6px;width:0.9px;height:0.9px;background:#1e1e1e;"></div>
<div class="b" style="left:608.4px;top:55.6px;width:4.2px;height:1.7px;background:#1e1e1e;"></div>
<div class="b" style="left:491.3px;top:63px;width:154.7px;height:7.8px;background:#ffffff;"></div>
<div class="t" style="left:493px;top:65.16px;font-size:5.25px;color:#717171;font-weight:normal;">Search Solution Explorer (Ctrl+;)</div>
<svg class="b" style="left:634.5px;top:64px" width="6" height="6" viewBox="0 0 6 6"><circle cx="3.6" cy="2.4" r="1.7" fill="none" stroke="#1e1e1e" stroke-width="0.8"/><path d="M2.4 3.6 L0.5 5.5" stroke="#1e1e1e" stroke-width="1"/></svg>
<svg class="b" style="left:642.5px;top:66.5px" width="3" height="2" viewBox="0 0 3 2"><path d="M0 0 H3 L1.5 1.8Z" fill="#555"/></svg>
<div class="b" style="left:640.5px;top:72px;width:5.5px;height:154px;background:#f0f0f3;"></div>
<svg class="b" style="left:641.5px;top:76.5px" width="3" height="2" viewBox="0 0 3 2"><path d="M0 1.8 H3 L1.5 0Z" fill="#868999"/></svg>
<div class="b" style="left:641px;top:93.2px;width:4.2px;height:106.8px;background:#d9dae0;"></div>
<svg class="b" style="left:641.5px;top:222px" width="3" height="2" viewBox="0 0 3 2"><path d="M0 0 H3 L1.5 1.8Z" fill="#868999"/></svg>
<div class="b" style="left:490.7px;top:171.1px;width:148.3px;height:8.7px;background:#cbcdd9;"></div>
<div class="b" style="left:490.7px;top:72px;width:148.8px;height:153.9px;overflow:hidden">
<svg class="b" style="left:5.700000000000012px;top:5.1px" width="3.2" height="4" viewBox="0 0 3.2 4"><path d="M0.35 0.35 L2.7 2 L0.35 3.65Z" fill="#b8b8b8" stroke="#555" stroke-width="0.55"/></svg>
<svg class="b" style="left:10.5px;top:3.8px" width="11" height="6.5" viewBox="0 0 11 6.5"><circle cx="1" cy="1.3" r="0.7" fill="#5aa7d6"/><rect x="0.2" y="2" width="1.6" height="1.7" fill="#5aa7d6"/><rect x="3" y="0.2" width="7" height="5.6" fill="#d8dcd0" stroke="#9aa08e" stroke-width="0.5"/><path d="M4 2.5 L5.5 1.5 V3.5Z" fill="#555"/><rect x="6.5" y="1.5" width="2.5" height="2.5" fill="#444" stroke="#eee" stroke-width="0.5"/></svg>
<div class="t" style="left:23.099999999999966px;top:5.23px;font-size:5.3px;color:#1e1e1e;font-weight:normal">Shared</div>
<svg class="b" style="left:5.700000000000012px;top:13.169999999999993px" width="3.2" height="4" viewBox="0 0 3.2 4"><path d="M0.35 0.35 L2.7 2 L0.35 3.65Z" fill="#b8b8b8" stroke="#555" stroke-width="0.55"/></svg>
<svg class="b" style="left:10.5px;top:11.869999999999994px" width="11" height="6.5" viewBox="0 0 11 6.5"><circle cx="1" cy="1.3" r="0.7" fill="#5aa7d6"/><rect x="0.2" y="2" width="1.6" height="1.7" fill="#5aa7d6"/><rect x="3" y="0" width="7" height="6" fill="#c8d890"/><rect x="3" y="0" width="7" height="1.3" fill="#3d6ea8"/><ellipse cx="6.5" cy="3.8" rx="2.5" ry="1.6" fill="#7db83a"/></svg>
<div class="t" style="left:23.099999999999966px;top:13.30px;font-size:5.3px;color:#1e1e1e;font-weight:bold">XamarinStore.Droid</div>
<svg class="b" style="left:5.600000000000011px;top:21.54px" width="3.2" height="3.2" viewBox="0 0 3.2 3.2"><path d="M3 0.2 V3 H0.2Z" fill="#1e1e1e"/></svg>
<svg class="b" style="left:10.5px;top:19.94px" width="11" height="6.5" viewBox="0 0 11 6.5"><circle cx="1" cy="1.3" r="0.7" fill="#5aa7d6"/><rect x="0.2" y="2" width="1.6" height="1.7" fill="#5aa7d6"/><rect x="3.2" y="0.3" width="6.6" height="5.4" fill="#fff" stroke="#666" stroke-width="0.6"/><rect x="3.2" y="0.3" width="6.6" height="1.2" fill="#444"/></svg>
<div class="t" style="left:23.099999999999966px;top:21.37px;font-size:5.3px;color:#1e1e1e;font-weight:normal">XamarinStore.iOS</div>
<svg class="b" style="left:13.9px;top:29.31000000000001px" width="3.2" height="4" viewBox="0 0 3.2 4"><path d="M0.35 0.35 L2.7 2 L0.35 3.65Z" fill="#b8b8b8" stroke="#555" stroke-width="0.55"/></svg>
<div class="b" style="left:21.80000000000001px;top:29.910000000000007px;width:1.6px;height:1.6px;background:#1e1e1e"></div><div class="b" style="left:24.30000000000001px;top:29.410000000000007px;width:3px;height:3px;background:#1e1e1e"></div>
<div class="t" style="left:31.099999999999966px;top:29.44px;font-size:5.3px;color:#1e1e1e;font-weight:normal">References</div>
<svg class="b" style="left:13.9px;top:37.38px" width="3.2" height="4" viewBox="0 0 3.2 4"><path d="M0.35 0.35 L2.7 2 L0.35 3.65Z" fill="#b8b8b8" stroke="#555" stroke-width="0.55"/></svg>
<svg class="b" style="left:21.599999999999966px;top:36.480000000000004px" width="7" height="5.6" viewBox="0 0 7 5.6"><path d="M0 0 H2.8 L3.4 0.7 H6.8 V5.6 H0Z" fill="#efdf9c"/></svg>
<div class="t" style="left:31.099999999999966px;top:37.51px;font-size:5.3px;color:#1e1e1e;font-weight:normal">Components (1 updates)</div>
<svg class="b" style="left:13.9px;top:45.449999999999996px" width="3.2" height="4" viewBox="0 0 3.2 4"><path d="M0.35 0.35 L2.7 2 L0.35 3.65Z" fill="#b8b8b8" stroke="#555" stroke-width="0.55"/></svg>
<svg class="b" style="left:21.599999999999966px;top:45.05px" width="7" height="4.8" viewBox="0 0 7 4.8"><path d="M0 0 H2.6 L3.2 0.6 H6.8 V4.6 H0Z" fill="#d9c08a"/></svg>
<div class="t" style="left:31.099999999999966px;top:45.58px;font-size:5.3px;color:#1e1e1e;font-weight:normal">Helpers</div>
<svg class="b" style="left:13.9px;top:53.52px" width="3.2" height="4" viewBox="0 0 3.2 4"><path d="M0.35 0.35 L2.7 2 L0.35 3.65Z" fill="#b8b8b8" stroke="#555" stroke-width="0.55"/></svg>
<svg class="b" style="left:21.599999999999966px;top:53.120000000000005px" width="7" height="4.8" viewBox="0 0 7 4.8"><path d="M0 0 H2.6 L3.2 0.6 H6.8 V4.6 H0Z" fill="#d9c08a"/></svg>
<div class="t" style="left:31.099999999999966px;top:53.65px;font-size:5.3px;color:#1e1e1e;font-weight:normal">Resources</div>
<svg class="b" style="left:13.9px;top:61.59000000000001px" width="3.2" height="4" viewBox="0 0 3.2 4"><path d="M0.35 0.35 L2.7 2 L0.35 3.65Z" fill="#b8b8b8" stroke="#555" stroke-width="0.55"/></svg>
<svg class="b" style="left:21.599999999999966px;top:61.19000000000001px" width="7" height="4.8" viewBox="0 0 7 4.8"><path d="M0 0 H2.6 L3.2 0.6 H6.8 V4.6 H0Z" fill="#d9c08a"/></svg>
<div class="t" style="left:31.099999999999966px;top:61.72px;font-size:5.3px;color:#1e1e1e;font-weight:normal">Shared</div>
<svg class="b" style="left:13.8px;top:69.96000000000001px" width="3.2" height="3.2" viewBox="0 0 3.2 3.2"><path d="M3 0.2 V3 H0.2Z" fill="#1e1e1e"/></svg>
<svg class="b" style="left:21.599999999999966px;top:69.16px" width="7" height="5" viewBox="0 0 7 5"><path d="M0 0 H2.6 L3.2 0.6 H6.8 V4.8 H0Z" fill="#d9c08a"/><path d="M0.8 1.6 H6 V4 H0.8Z" fill="#f8f4e8"/></svg>
<div class="t" style="left:31.099999999999966px;top:69.79px;font-size:5.3px;color:#1e1e1e;font-weight:normal">ViewControllers</div>
<svg class="b" style="left:22.099999999999987px;top:77.72999999999999px" width="3.2" height="4" viewBox="0 0 3.2 4"><path d="M0.35 0.35 L2.7 2 L0.35 3.65Z" fill="#b8b8b8" stroke="#555" stroke-width="0.55"/></svg>
<svg class="b" style="left:27.200000000000056px;top:77.13px" width="3" height="5" viewBox="0 0 3 5"><circle cx="1.4" cy="1.1" r="0.8" fill="#5a9fd0"/><rect x="0.3" y="2" width="2.3" height="2.3" fill="#5a9fd0"/></svg>
<svg class="b" style="left:31.000000000000057px;top:77.03px" width="6" height="5" viewBox="0 0 6 5"><path d="M2.9 1.0 A1.6 1.6 0 1 0 2.9 3.9" fill="none" stroke="#4c9a48" stroke-width="1"/><path d="M3.6 1.3 H5.6 M3.6 2.4 H5.6 M4.2 0.5 V3.0 M5.0 0.5 V3.0" stroke="#4c9a48" stroke-width="0.5"/></svg>
<div class="t" style="left:39.30000000000001px;top:77.86px;font-size:5.3px;color:#1e1e1e;font-weight:normal">BasketViewController.cs</div>
<svg class="b" style="left:22.099999999999987px;top:85.79999999999998px" width="3.2" height="4" viewBox="0 0 3.2 4"><path d="M0.35 0.35 L2.7 2 L0.35 3.65Z" fill="#b8b8b8" stroke="#555" stroke-width="0.55"/></svg>
<svg class="b" style="left:27.200000000000056px;top:85.19999999999999px" width="3" height="5" viewBox="0 0 3 5"><circle cx="1.4" cy="1.1" r="0.8" fill="#5a9fd0"/><rect x="0.3" y="2" width="2.3" height="2.3" fill="#5a9fd0"/></svg>
<svg class="b" style="left:31.000000000000057px;top:85.1px" width="6" height="5" viewBox="0 0 6 5"><path d="M2.9 1.0 A1.6 1.6 0 1 0 2.9 3.9" fill="none" stroke="#4c9a48" stroke-width="1"/><path d="M3.6 1.3 H5.6 M3.6 2.4 H5.6 M4.2 0.5 V3.0 M5.0 0.5 V3.0" stroke="#4c9a48" stroke-width="0.5"/></svg>
<div class="t" style="left:39.30000000000001px;top:85.93px;font-size:5.3px;color:#1e1e1e;font-weight:normal">LoginViewController.cs</div>
<svg class="b" style="left:22.099999999999987px;top:93.87px" width="3.2" height="4" viewBox="0 0 3.2 4"><path d="M0.35 0.35 L2.7 2 L0.35 3.65Z" fill="#b8b8b8" stroke="#555" stroke-width="0.55"/></svg>
<svg class="b" style="left:27.200000000000056px;top:93.27000000000001px" width="3" height="5" viewBox="0 0 3 5"><circle cx="1.4" cy="1.1" r="0.8" fill="#5a9fd0"/><rect x="0.3" y="2" width="2.3" height="2.3" fill="#5a9fd0"/></svg>
<svg class="b" style="left:31.000000000000057px;top:93.17000000000002px" width="6" height="5" viewBox="0 0 6 5"><path d="M2.9 1.0 A1.6 1.6 0 1 0 2.9 3.9" fill="none" stroke="#4c9a48" stroke-width="1"/><path d="M3.6 1.3 H5.6 M3.6 2.4 H5.6 M4.2 0.5 V3.0 M5.0 0.5 V3.0" stroke="#4c9a48" stroke-width="0.5"/></svg>
<div class="t" style="left:39.30000000000001px;top:94.00px;font-size:5.3px;color:#1e1e1e;font-weight:normal">ProcessingViewController.cs</div>
<svg class="b" style="left:22.099999999999987px;top:101.94px" width="3.2" height="4" viewBox="0 0 3.2 4"><path d="M0.35 0.35 L2.7 2 L0.35 3.65Z" fill="#b8b8b8" stroke="#555" stroke-width="0.55"/></svg>
<svg class="b" style="left:27.200000000000056px;top:101.34px" width="3" height="5" viewBox="0 0 3 5"><circle cx="1.4" cy="1.1" r="0.8" fill="#5a9fd0"/><rect x="0.3" y="2" width="2.3" height="2.3" fill="#5a9fd0"/></svg>
<svg class="b" style="left:31.000000000000057px;top:101.24000000000001px" width="6" height="5" viewBox="0 0 6 5"><path d="M2.9 1.0 A1.6 1.6 0 1 0 2.9 3.9" fill="none" stroke="#4c9a48" stroke-width="1"/><path d="M3.6 1.3 H5.6 M3.6 2.4 H5.6 M4.2 0.5 V3.0 M5.0 0.5 V3.0" stroke="#4c9a48" stroke-width="0.5"/></svg>
<div class="t" style="left:39.30000000000001px;top:102.07px;font-size:5.3px;color:#1e1e1e;font-weight:normal">ProductDetailViewController.cs</div>
<svg class="b" style="left:22.099999999999987px;top:110.00999999999999px" width="3.2" height="4" viewBox="0 0 3.2 4"><path d="M0.35 0.35 L2.7 2 L0.35 3.65Z" fill="#b8b8b8" stroke="#555" stroke-width="0.55"/></svg>
<svg class="b" style="left:27.200000000000056px;top:109.41px" width="3" height="5" viewBox="0 0 3 5"><circle cx="1.4" cy="1.1" r="0.8" fill="#5a9fd0"/><rect x="0.3" y="2" width="2.3" height="2.3" fill="#5a9fd0"/></svg>
<svg class="b" style="left:31.000000000000057px;top:109.31px" width="6" height="5" viewBox="0 0 6 5"><path d="M2.9 1.0 A1.6 1.6 0 1 0 2.9 3.9" fill="none" stroke="#4c9a48" stroke-width="1"/><path d="M3.6 1.3 H5.6 M3.6 2.4 H5.6 M4.2 0.5 V3.0 M5.0 0.5 V3.0" stroke="#4c9a48" stroke-width="0.5"/></svg>
<div class="t" style="left:39.30000000000001px;top:110.14px;font-size:5.3px;color:#1e1e1e;font-weight:normal">ProductListViewController.cs</div>
<svg class="b" style="left:22.099999999999987px;top:118.08000000000001px" width="3.2" height="4" viewBox="0 0 3.2 4"><path d="M0.35 0.35 L2.7 2 L0.35 3.65Z" fill="#b8b8b8" stroke="#555" stroke-width="0.55"/></svg>
<svg class="b" style="left:27.200000000000056px;top:117.48000000000002px" width="3" height="5" viewBox="0 0 3 5"><circle cx="1.4" cy="1.1" r="0.8" fill="#5a9fd0"/><rect x="0.3" y="2" width="2.3" height="2.3" fill="#5a9fd0"/></svg>
<svg class="b" style="left:31.000000000000057px;top:117.38000000000002px" width="6" height="5" viewBox="0 0 6 5"><path d="M2.9 1.0 A1.6 1.6 0 1 0 2.9 3.9" fill="none" stroke="#4c9a48" stroke-width="1"/><path d="M3.6 1.3 H5.6 M3.6 2.4 H5.6 M4.2 0.5 V3.0 M5.0 0.5 V3.0" stroke="#4c9a48" stroke-width="0.5"/></svg>
<div class="t" style="left:39.30000000000001px;top:118.21px;font-size:5.3px;color:#1e1e1e;font-weight:normal">ShippingAddressViewController.cs</div>
<svg class="b" style="left:22.099999999999987px;top:126.15px" width="3.2" height="4" viewBox="0 0 3.2 4"><path d="M0.35 0.35 L2.7 2 L0.35 3.65Z" fill="#b8b8b8" stroke="#555" stroke-width="0.55"/></svg>
<svg class="b" style="left:27.200000000000056px;top:125.55000000000001px" width="3" height="5" viewBox="0 0 3 5"><circle cx="1.4" cy="1.1" r="0.8" fill="#5a9fd0"/><rect x="0.3" y="2" width="2.3" height="2.3" fill="#5a9fd0"/></svg>
<svg class="b" style="left:31.000000000000057px;top:125.45000000000002px" width="6" height="5" viewBox="0 0 6 5"><path d="M2.9 1.0 A1.6 1.6 0 1 0 2.9 3.9" fill="none" stroke="#4c9a48" stroke-width="1"/><path d="M3.6 1.3 H5.6 M3.6 2.4 H5.6 M4.2 0.5 V3.0 M5.0 0.5 V3.0" stroke="#4c9a48" stroke-width="0.5"/></svg>
<div class="t" style="left:39.30000000000001px;top:126.28px;font-size:5.3px;color:#1e1e1e;font-weight:normal">StringTableViewController.cs</div>
<svg class="b" style="left:13.9px;top:134.22px" width="3.2" height="4" viewBox="0 0 3.2 4"><path d="M0.35 0.35 L2.7 2 L0.35 3.65Z" fill="#b8b8b8" stroke="#555" stroke-width="0.55"/></svg>
<svg class="b" style="left:21.599999999999966px;top:133.82px" width="7" height="4.8" viewBox="0 0 7 4.8"><path d="M0 0 H2.6 L3.2 0.6 H6.8 V4.6 H0Z" fill="#d9c08a"/></svg>
<div class="t" style="left:31.099999999999966px;top:134.35px;font-size:5.3px;color:#1e1e1e;font-weight:normal">Views</div>
<svg class="b" style="left:13.9px;top:142.29px" width="3.2" height="4" viewBox="0 0 3.2 4"><path d="M0.35 0.35 L2.7 2 L0.35 3.65Z" fill="#b8b8b8" stroke="#555" stroke-width="0.55"/></svg>
<svg class="b" style="left:19.2px;top:141.69px" width="3" height="5" viewBox="0 0 3 5"><circle cx="1.4" cy="1.1" r="0.8" fill="#5a9fd0"/><rect x="0.3" y="2" width="2.3" height="2.3" fill="#5a9fd0"/></svg>
<svg class="b" style="left:23.0px;top:141.59px" width="6" height="5" viewBox="0 0 6 5"><path d="M2.9 1.0 A1.6 1.6 0 1 0 2.9 3.9" fill="none" stroke="#4c9a48" stroke-width="1"/><path d="M3.6 1.3 H5.6 M3.6 2.4 H5.6 M4.2 0.5 V3.0 M5.0 0.5 V3.0" stroke="#4c9a48" stroke-width="0.5"/></svg>
<div class="t" style="left:31.099999999999966px;top:142.42px;font-size:5.3px;color:#1e1e1e;font-weight:normal">AppDelegate.cs</div>
<svg class="b" style="left:19.5px;top:148.76px" width="11" height="7" viewBox="0 0 11 7"><circle cx="1.1" cy="2.4" r="0.7" fill="#5aa7d6"/><rect x="0.3" y="3.1" width="1.6" height="1.7" fill="#5aa7d6"/><path d="M3.8 0.8 H6.2 L7.4 2 V6.5 H3.8Z" fill="#fff" stroke="#555" stroke-width="0.6"/></svg>
<div class="t" style="left:31.099999999999966px;top:150.49px;font-size:5.3px;color:#1e1e1e;font-weight:normal">Entitlements.plist</div>
</div>
<div class="b" style="left:491.3px;top:226.7px;width:45.2px;height:8.3px;background:#ffffff;"></div>
<div class="t" style="left:492.6px;top:229.26px;font-size:5.25px;color:#2a86c6;font-weight:normal;">Solution Explorer</div>
<div class="t" style="left:538.7px;top:229.26px;font-size:5.25px;color:#1e1e1e;font-weight:normal;">Team Explorer</div>
<div class="t" style="left:577.5px;top:229.26px;font-size:5.25px;color:#1e1e1e;font-weight:normal;">Class View</div>
<div class="b" style="left:490.5px;top:235.2px;width:157px;height:3.5px;background:#d5d6dd;"></div>
<div class="b" style="left:490.4px;top:238.5px;width:157.2px;height:141.5px;background:#f3f3f4;border:0.7px solid #dcdde4;box-sizing:border-box"></div>
<div class="t" style="left:492.3px;top:242.26px;font-size:5.25px;color:#555555;font-weight:normal;-webkit-text-stroke:0">Properties</div>
<div class="b" style="left:517px;top:242.8px;width:103px;height:2.6px;background:#e9eaee;"></div>
<svg class="b" style="left:624.5px;top:243px" width="3" height="2" viewBox="0 0 3 2"><path d="M0 0 H3 L1.5 1.8Z" fill="#1e1e1e"/></svg>
<svg class="b" style="left:632px;top:240.8px" width="3" height="5.5" viewBox="0 0 3 5.5"><path d="M0.8 0.4 H2.2 V3 H0.8Z M0 3 H3 M1.5 3 V5.5" stroke="#1e1e1e" stroke-width="0.6" fill="none"/></svg>
<svg class="b" style="left:639.3px;top:241.8px" width="4.4" height="4.4" viewBox="0 0 4.4 4.4"><path d="M0.3 0.3 L4.1 4.1 M4.1 0.3 L0.3 4.1" stroke="#1e1e1e" stroke-width="0.75"/></svg>
<div class="b" style="left:491.3px;top:249.2px;width:154.7px;height:8.1px;background:#ffffff;"></div>
<svg class="b" style="left:642.5px;top:253px" width="3" height="2" viewBox="0 0 3 2"><path d="M0 0 H3 L1.5 1.8Z" fill="#555"/></svg>
<svg class="b" style="left:491.5px;top:259px" width="7" height="7" viewBox="0 0 7 7"><rect x="0.5" y="0.5" width="2" height="1.5" fill="#555"/><rect x="3.2" y="0.8" width="3" height="1" fill="#777"/><rect x="0.5" y="3" width="2" height="1.5" fill="#555"/><rect x="3.2" y="3.3" width="3" height="1" fill="#777"/><rect x="0.5" y="5.2" width="2" height="1.5" fill="#555"/><rect x="3.2" y="5.5" width="3" height="1" fill="#777"/></svg>
<svg class="b" style="left:498.5px;top:259px" width="8" height="7" viewBox="0 0 8 7"><rect x="0.3" y="0.5" width="3" height="2.5" fill="#555"/><rect x="0.3" y="4" width="3" height="2.5" fill="#555"/><path d="M6 0.5 V6.5 M4.8 5 L6 6.5 L7.2 5" stroke="#1b5c97" stroke-width="0.8" fill="none"/></svg>
<svg class="b" style="left:510.5px;top:259.5px" width="6" height="6" viewBox="0 0 6 6"><path d="M0.8 5.2 L3 3" stroke="#bdbdbd" stroke-width="1.1"/><circle cx="3.8" cy="2.2" r="1.4" fill="none" stroke="#bdbdbd" stroke-width="0.9"/></svg>
</body></html>
